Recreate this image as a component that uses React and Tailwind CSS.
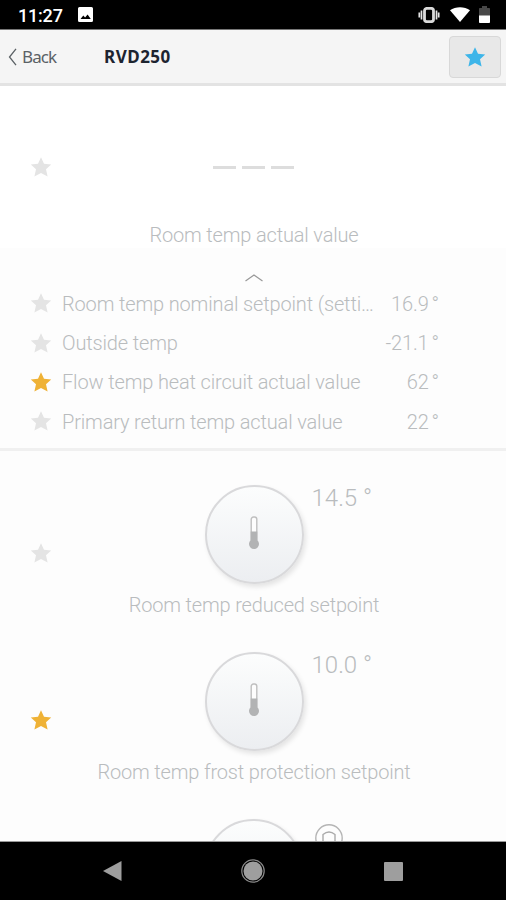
const READINGS = [
  { label: "Room temp nominal setpoint (setti…", value: "16.9", favorite: false },
  { label: "Outside temp", value: "-21.1", favorite: false },
  { label: "Flow temp heat circuit actual value", value: "62", favorite: true },
  { label: "Primary return temp actual value", value: "22", favorite: false },
];

const SETPOINTS = [
  { label: "Room temp reduced setpoint", value: "14.5", favorite: false },
  { label: "Room temp frost protection setpoint", value: "10.0", favorite: true },
];

const Star = ({ className }) => (
  <svg viewBox="0 0 22 21" className={`h-[21px] w-[22px] shrink-0 ${className}`}>
    <path
      fill="currentColor"
      d="M11 .2 14 6.800 21.200 7.400 16 12.200 17.600 19.500 11 16 4.400 19.500 6 12.200.8 7.400 8 6.800Z"
    />
  </svg>
);

const FavoriteStar = ({ active }) => (
  <Star className={active ? "text-[#efb236]" : "text-[#e4e4e4]"} />
);

const Thermometer = () => (
  <svg viewBox="0 0 12 34" className="mb-[3px] h-[34px] w-3">
    <rect x="3.200" y="1" width="5.600" height="25" rx="2.300" fill="#fdfdfd" stroke="#bfbfbf" strokeWidth="1.400" />
    <path fill="#b2b3b4" d="M2.700 15.500h6.600v8.800a5 5 0 1 1-6.600 0Z" />
  </svg>
);

const Dial = ({ children }) => (
  <div className="flex h-[99px] w-[99px] items-center justify-center rounded-full border-2 border-[#d9d9db] bg-gradient-to-b from-[#fcfdfd] to-[#eceef1] shadow-[2px_3px_5px_rgba(0,0,0,0.1)]">
    {children}
  </div>
);

const StatusBar = () => (
  <div className="flex h-[30px] shrink-0 items-center border-b border-[#777] bg-black pl-[18px] pr-[16px] text-white">
    <span className="w-[60px] pt-[3px] text-[18px] font-medium leading-none tracking-[-0.2px]">11:27</span>
    <svg viewBox="0 0 15 15" className="h-[15px] w-[15px]">
      <path fill="#fff" d="M1.5 0h12A1.5 1.5 0 0 1 15 1.5v12a1.5 1.5 0 0 1-1.5 1.5h-12A1.5 1.5 0 0 1 0 13.5v-12A1.5 1.5 0 0 1 1.5 0Z" />
      <path fill="#000" d="m2.5 12 2.8-3.4 1.8 2 2.5-3.2 3.2 4.6Z" />
    </svg>
    <div className="ml-auto flex items-center">
      {/* Vibrate */}
      <svg viewBox="0 0 22 16" className="h-4 w-[22px]">
        <path stroke="#e5e5e5" strokeWidth="1.700" d="M1.300 5.500v5M3.500 3.500v9M18.500 3.500v9M20.700 5.500v5" />
        <rect x="6.500" y="1.300" width="9" height="13.400" rx="2.500" fill="#000" stroke="#dadada" strokeWidth="2.800" />
      </svg>
      {/* Wifi */}
      <svg viewBox="0 0 20 15" className="ml-2.5 h-[15px] w-5">
        <path fill="#fff" d="M10 15 0 3.2C5.500-.9 14.500-.9 20 3.200Z" />
      </svg>
      {/* Battery */}
      <svg viewBox="0 0 11 17" className="ml-[9px] h-[17px] w-[11px]">
        <path fill="#484848" d="M3 0h5v2h2.200q.8 0 .8.800V10H0V2.800Q0 2 .8 2H3Z" />
        <path fill="#fff" d="M0 9.500h11v6.500q0 1-.8 1H.8q-.8 0-.8-1Z" />
      </svg>
    </div>
  </div>
);

const Header = () => (
  <div className="flex h-[56px] shrink-0 items-center border-b-[3px] border-[#e3e3e3] bg-[#f5f5f5] pl-2 pr-[5px] font-['Noto_Sans',sans-serif]">
    <div className="flex w-[96px] items-center text-[#5b6165]">
      <svg viewBox="0 0 9 18" className="h-[18px] w-[9px]">
        <path fill="none" stroke="currentColor" strokeWidth="1.300" d="M8 .8 1.500 9 8 17.200" />
      </svg>
      <span className="ml-[5px] text-[17px] leading-none tracking-[-0.9px]">Back</span>
    </div>
    <h1 className="text-[17px] font-bold leading-none tracking-[0.5px] text-[#1d2430]">RVD250</h1>
    <div className="ml-auto flex h-[42px] w-[52px] items-center justify-center rounded-[4px] border border-[#d8d8d8] bg-[#e8e8e8]">
      <Star className="mt-px text-[#3db5e9]" />
    </div>
  </div>
);

const ReadingRow = ({ label, value, favorite }) => (
  <div className="flex h-[39.4px] items-center">
    <FavoriteStar active={favorite} />
    <span className="ml-[10px] whitespace-nowrap">{label}</span>
    <span className="ml-auto">{value}</span>
    <span className="ml-[3px]">°</span>
  </div>
);

const Setpoint = ({ label, value, favorite }) => (
  <div className="grid h-[167px] shrink-0 grid-cols-[81px_1fr_79px] items-center">
    <div className="pl-[30px]">
      <FavoriteStar active={favorite} />
    </div>
    <div className="flex h-full flex-col items-center pt-[15px]">
      <div className="grid w-full grid-cols-[1fr_99px_1fr]">
        <div />
        <Dial>
          <Thermometer />
        </Dial>
        <div className="whitespace-nowrap pl-2 text-[24px] leading-[26px]">{value} °</div>
      </div>
      <div className="mt-[9px] whitespace-nowrap text-[20px] leading-6 tracking-[-0.17px]">{label}</div>
    </div>
    <div />
  </div>
);

const NavBar = () => (
  <div className="flex h-[58px] shrink-0 items-center justify-between bg-black pl-[102px] pr-[103px] text-[#9e9e9e]">
    <svg viewBox="0 0 20 22" className="h-[22px] w-5">
      <path fill="currentColor" d="M19.500 1v20L1 11Z" />
    </svg>
    <svg viewBox="0 0 26 26" className="h-[26px] w-[26px]">
      <circle cx="13" cy="13" r="11.200" fill="none" stroke="#8a8a8a" strokeWidth="1.200" />
      <circle cx="13" cy="13" r="9.500" fill="currentColor" />
    </svg>
    <div className="h-[19px] w-[19px] rounded-[1px] bg-[#9e9e9e]" />
  </div>
);

const App = () => {
  return (
    <div className="flex h-[900px] w-[506px] flex-col overflow-hidden bg-[#fdfdfd] font-['Roboto',sans-serif]">
      <StatusBar />
      <Header />

      <main className="flex min-h-0 flex-1 flex-col overflow-hidden border-b border-[#999] font-light text-[#b9bcbe]">
        {/* Current room temperature and readings */}
        <section className="flex h-[365px] shrink-0 flex-col border-b-[3px] border-[#f0f0f0]">
          <div className="grid h-[162px] grid-cols-[81px_1fr_80px] items-center bg-white">
            <div className="pl-[30px]">
              <FavoriteStar active={false} />
            </div>
            <div className="flex justify-center gap-[6px]">
              <div className="h-[3px] w-[23px] bg-[#dddddd]" />
              <div className="h-[3px] w-[23px] bg-[#dddddd]" />
              <div className="h-[3px] w-[23px] bg-[#dddddd]" />
            </div>
          </div>
          <div className="-mt-[25px] pl-[2px] text-center text-[20px] leading-6 tracking-[-0.17px]">
            Room temp actual value
          </div>
          <div className="mt-[26px] flex justify-center pl-[2px]">
            <svg viewBox="0 0 18 9" className="h-[9px] w-[18px]">
              <path fill="none" stroke="#999" strokeWidth="1.200" d="M.5 8 9 2 17.500 8" />
            </svg>
          </div>
          <div className="mt-[2px] pl-[30px] pr-[67px] text-[20px] tracking-[-0.15px]">
            {READINGS.map((reading) => (
              <ReadingRow key={reading.label} {...reading} />
            ))}
          </div>
        </section>

        {/* Adjustable setpoints */}
        <section className="flex min-h-0 flex-1 flex-col overflow-hidden pt-[19px]">
          {SETPOINTS.map((setpoint) => (
            <Setpoint key={setpoint.label} {...setpoint} />
          ))}
          <div className="flex shrink-0 pl-[204px] pt-[15px]">
            <Dial />
            <svg viewBox="0 0 28 28" className="ml-3 mt-[5px] h-7 w-7">
              <circle cx="14" cy="14" r="13.200" fill="none" stroke="#b5b5b5" strokeWidth="1.400" />
              <path fill="none" stroke="#aaa" strokeWidth="1.400" d="M8 20V10.500q6-5 12 0V20Z" />
            </svg>
          </div>
        </section>
      </main>

      <NavBar />
    </div>
  );
};

export default App;
